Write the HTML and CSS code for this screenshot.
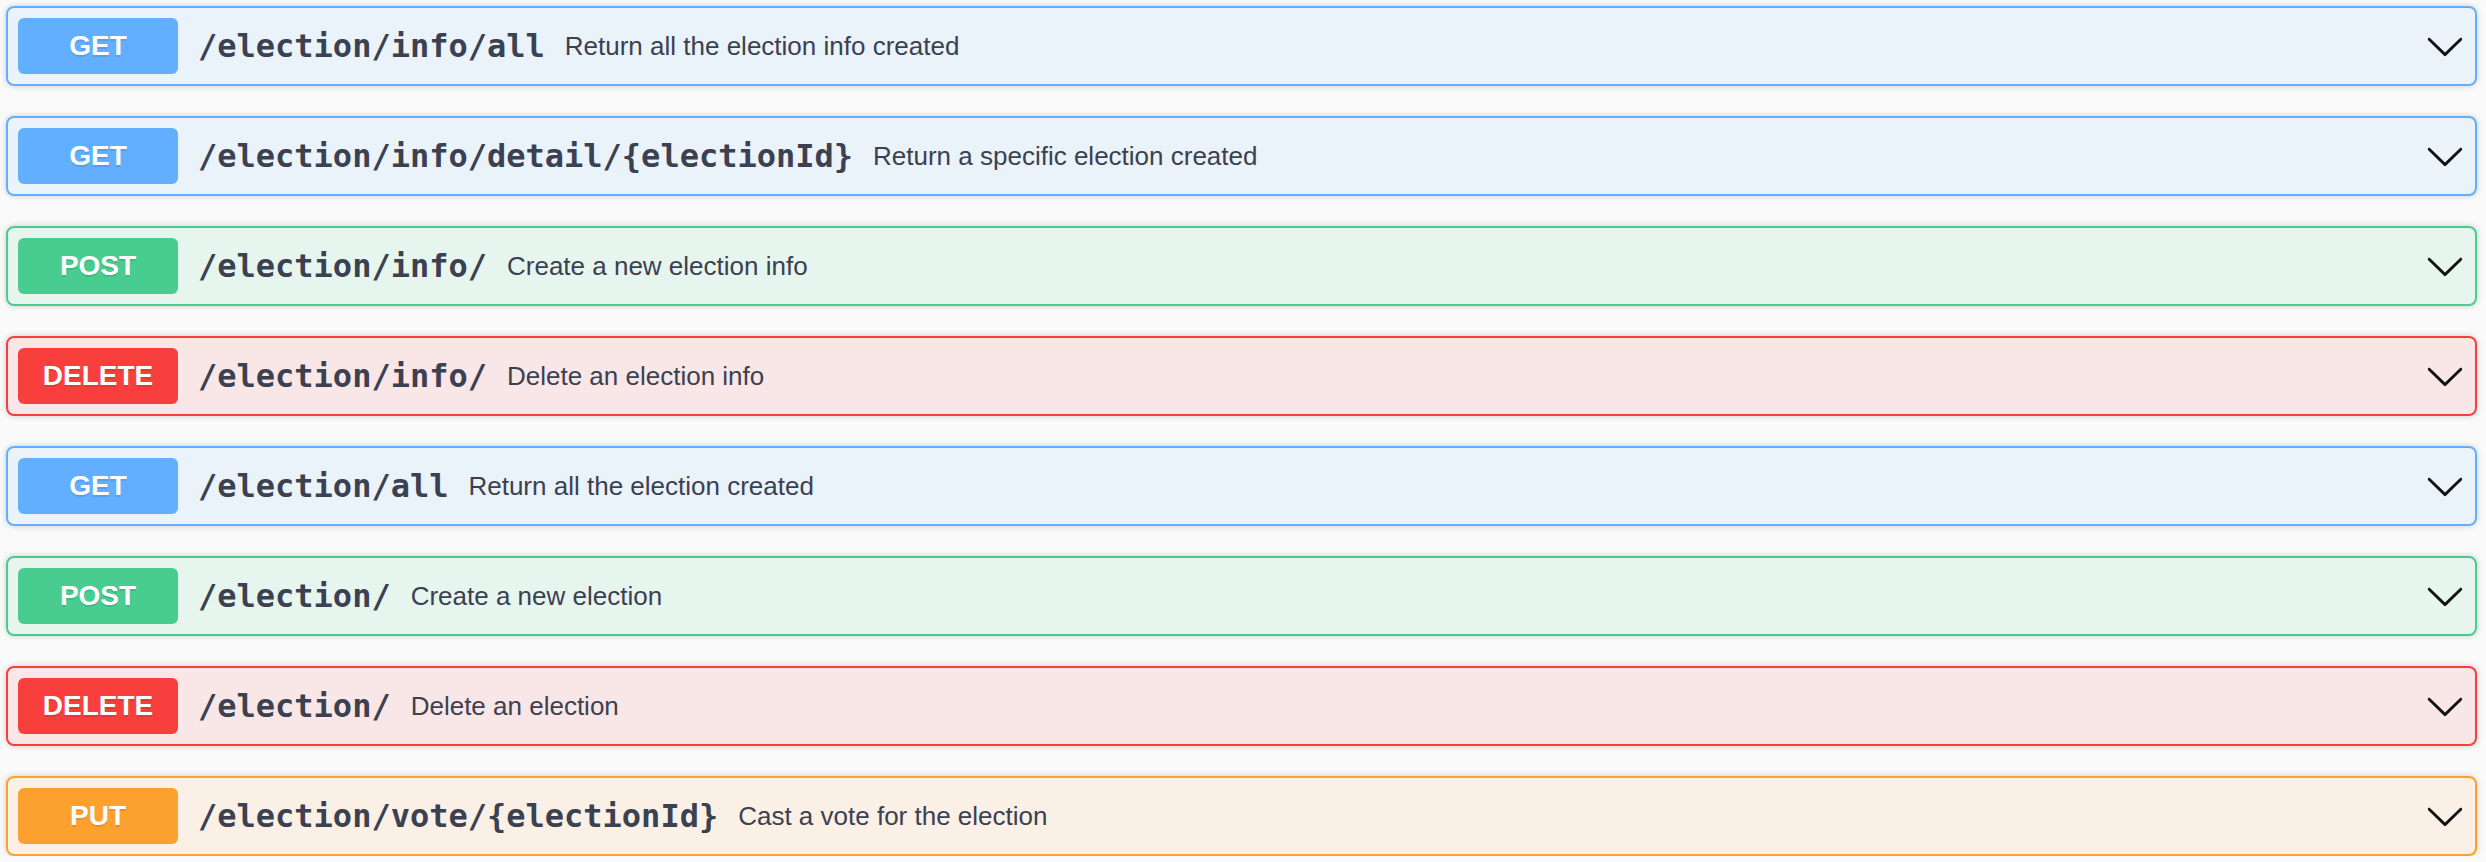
FILE: index.html
```html
<!DOCTYPE html>
<html>
<head>
<meta charset="utf-8">
<link rel="stylesheet" href="styles.css">
</head>
<body>
<div class="opblocks">
  <div class="opblock get">
    <div class="summary">
      <span class="method">GET</span>
      <span class="path">/election/info/all</span>
      <span class="desc">Return all the election info created</span>
      <svg class="arrow" viewBox="0 0 20 20"><path d="M17.418 6.109c.272-.268.709-.268.979 0s.271.701 0 .969l-7.908 7.83c-.27.268-.707.268-.979 0l-7.908-7.83c-.27-.268-.27-.701 0-.969.271-.268.709-.268.979 0L10 13.25l7.418-7.141z"/></svg>
    </div>
  </div>
  <div class="opblock get">
    <div class="summary">
      <span class="method">GET</span>
      <span class="path">/election/info/detail/{electionId}</span>
      <span class="desc">Return a specific election created</span>
      <svg class="arrow" viewBox="0 0 20 20"><path d="M17.418 6.109c.272-.268.709-.268.979 0s.271.701 0 .969l-7.908 7.83c-.27.268-.707.268-.979 0l-7.908-7.83c-.27-.268-.27-.701 0-.969.271-.268.709-.268.979 0L10 13.25l7.418-7.141z"/></svg>
    </div>
  </div>
  <div class="opblock post">
    <div class="summary">
      <span class="method">POST</span>
      <span class="path">/election/info/</span>
      <span class="desc">Create a new election info</span>
      <svg class="arrow" viewBox="0 0 20 20"><path d="M17.418 6.109c.272-.268.709-.268.979 0s.271.701 0 .969l-7.908 7.83c-.27.268-.707.268-.979 0l-7.908-7.83c-.27-.268-.27-.701 0-.969.271-.268.709-.268.979 0L10 13.25l7.418-7.141z"/></svg>
    </div>
  </div>
  <div class="opblock delete">
    <div class="summary">
      <span class="method">DELETE</span>
      <span class="path">/election/info/</span>
      <span class="desc">Delete an election info</span>
      <svg class="arrow" viewBox="0 0 20 20"><path d="M17.418 6.109c.272-.268.709-.268.979 0s.271.701 0 .969l-7.908 7.83c-.27.268-.707.268-.979 0l-7.908-7.830c-.27-.268-.27-.701 0-.969.271-.268.709-.268.979 0L10 13.25l7.418-7.141z"/></svg>
    </div>
  </div>
  <div class="opblock get">
    <div class="summary">
      <span class="method">GET</span>
      <span class="path">/election/all</span>
      <span class="desc">Return all the election created</span>
      <svg class="arrow" viewBox="0 0 20 20"><path d="M17.418 6.109c.272-.268.709-.268.979 0s.271.701 0 .969l-7.908 7.83c-.27.268-.707.268-.979 0l-7.908-7.83c-.27-.268-.27-.701 0-.969.271-.268.709-.268.979 0L10 13.25l7.418-7.141z"/></svg>
    </div>
  </div>
  <div class="opblock post">
    <div class="summary">
      <span class="method">POST</span>
      <span class="path">/election/</span>
      <span class="desc">Create a new election</span>
      <svg class="arrow" viewBox="0 0 20 20"><path d="M17.418 6.109c.272-.268.709-.268.979 0s.271.701 0 .969l-7.908 7.83c-.27.268-.707.268-.979 0l-7.908-7.83c-.27-.268-.27-.701 0-.969.271-.268.709-.268.979 0L10 13.25l7.418-7.141z"/></svg>
    </div>
  </div>
  <div class="opblock delete">
    <div class="summary">
      <span class="method">DELETE</span>
      <span class="path">/election/</span>
      <span class="desc">Delete an election</span>
      <svg class="arrow" viewBox="0 0 20 20"><path d="M17.418 6.109c.272-.268.709-.268.979 0s.271.701 0 .969l-7.908 7.83c-.27.268-.707.268-.979 0l-7.908-7.83c-.27-.268-.27-.701 0-.969.271-.268.709-.268.979 0L10 13.25l7.418-7.141z"/></svg>
    </div>
  </div>
  <div class="opblock put">
    <div class="summary">
      <span class="method">PUT</span>
      <span class="path">/election/vote/{electionId}</span>
      <span class="desc">Cast a vote for the election</span>
      <svg class="arrow" viewBox="0 0 20 20"><path d="M17.418 6.109c.272-.268.709-.268.979 0s.271.701 0 .969l-7.908 7.83c-.27.268-.707.268-.979 0l-7.908-7.83c-.27-.268-.27-.701 0-.969.271-.268.709-.268.979 0L10 13.25l7.418-7.141z"/></svg>
    </div>
  </div>
</div>
</body>
</html>
```

FILE: styles.css
```css
body {
  margin: 0;
  background: #fafafa;
}

.opblocks {
  display: flex;
  flex-direction: column;
  gap: 30px;
  padding: 6px 9px 0 6px;
}

.opblock {
  border: 2px solid #000;
  border-radius: 8px;
  box-shadow: 0 0 6px rgba(0, 0, 0, 0.19);
}

.summary {
  display: flex;
  align-items: center;
  padding: 10px;
}

.method {
  min-width: 160px;
  padding: 12px 0;
  line-height: 32px;
  border-radius: 6px;
  text-align: center;
  color: #fff;
  font-family: "Liberation Sans", Arial, sans-serif;
  font-weight: 700;
  font-size: 28px;
  text-shadow: 0 2px 0 rgba(0, 0, 0, 0.1);
}

.path {
  padding: 0 20px;
  color: #3b4151;
  font-family: "DejaVu Sans Mono", monospace;
  font-weight: 700;
  font-size: 32px;
}

.desc {
  flex: 1 1 auto;
  color: #3b4151;
  font-family: "Liberation Sans", Arial, sans-serif;
  font-size: 26px;
}

.arrow {
  width: 40px;
  height: 40px;
  fill: #111;
  flex: none;
}

.get { border-color: #61affe; background: rgba(97, 175, 254, 0.1); }
.get .method { background: #61affe; }

.post { border-color: #49cc90; background: rgba(73, 204, 144, 0.1); }
.post .method { background: #49cc90; }

.delete { border-color: #f93e3e; background: rgba(249, 62, 62, 0.1); }
.delete .method { background: #f93e3e; }

.put { border-color: #fca130; background: rgba(252, 161, 48, 0.1); }
.put .method { background: #fca130; }
```
